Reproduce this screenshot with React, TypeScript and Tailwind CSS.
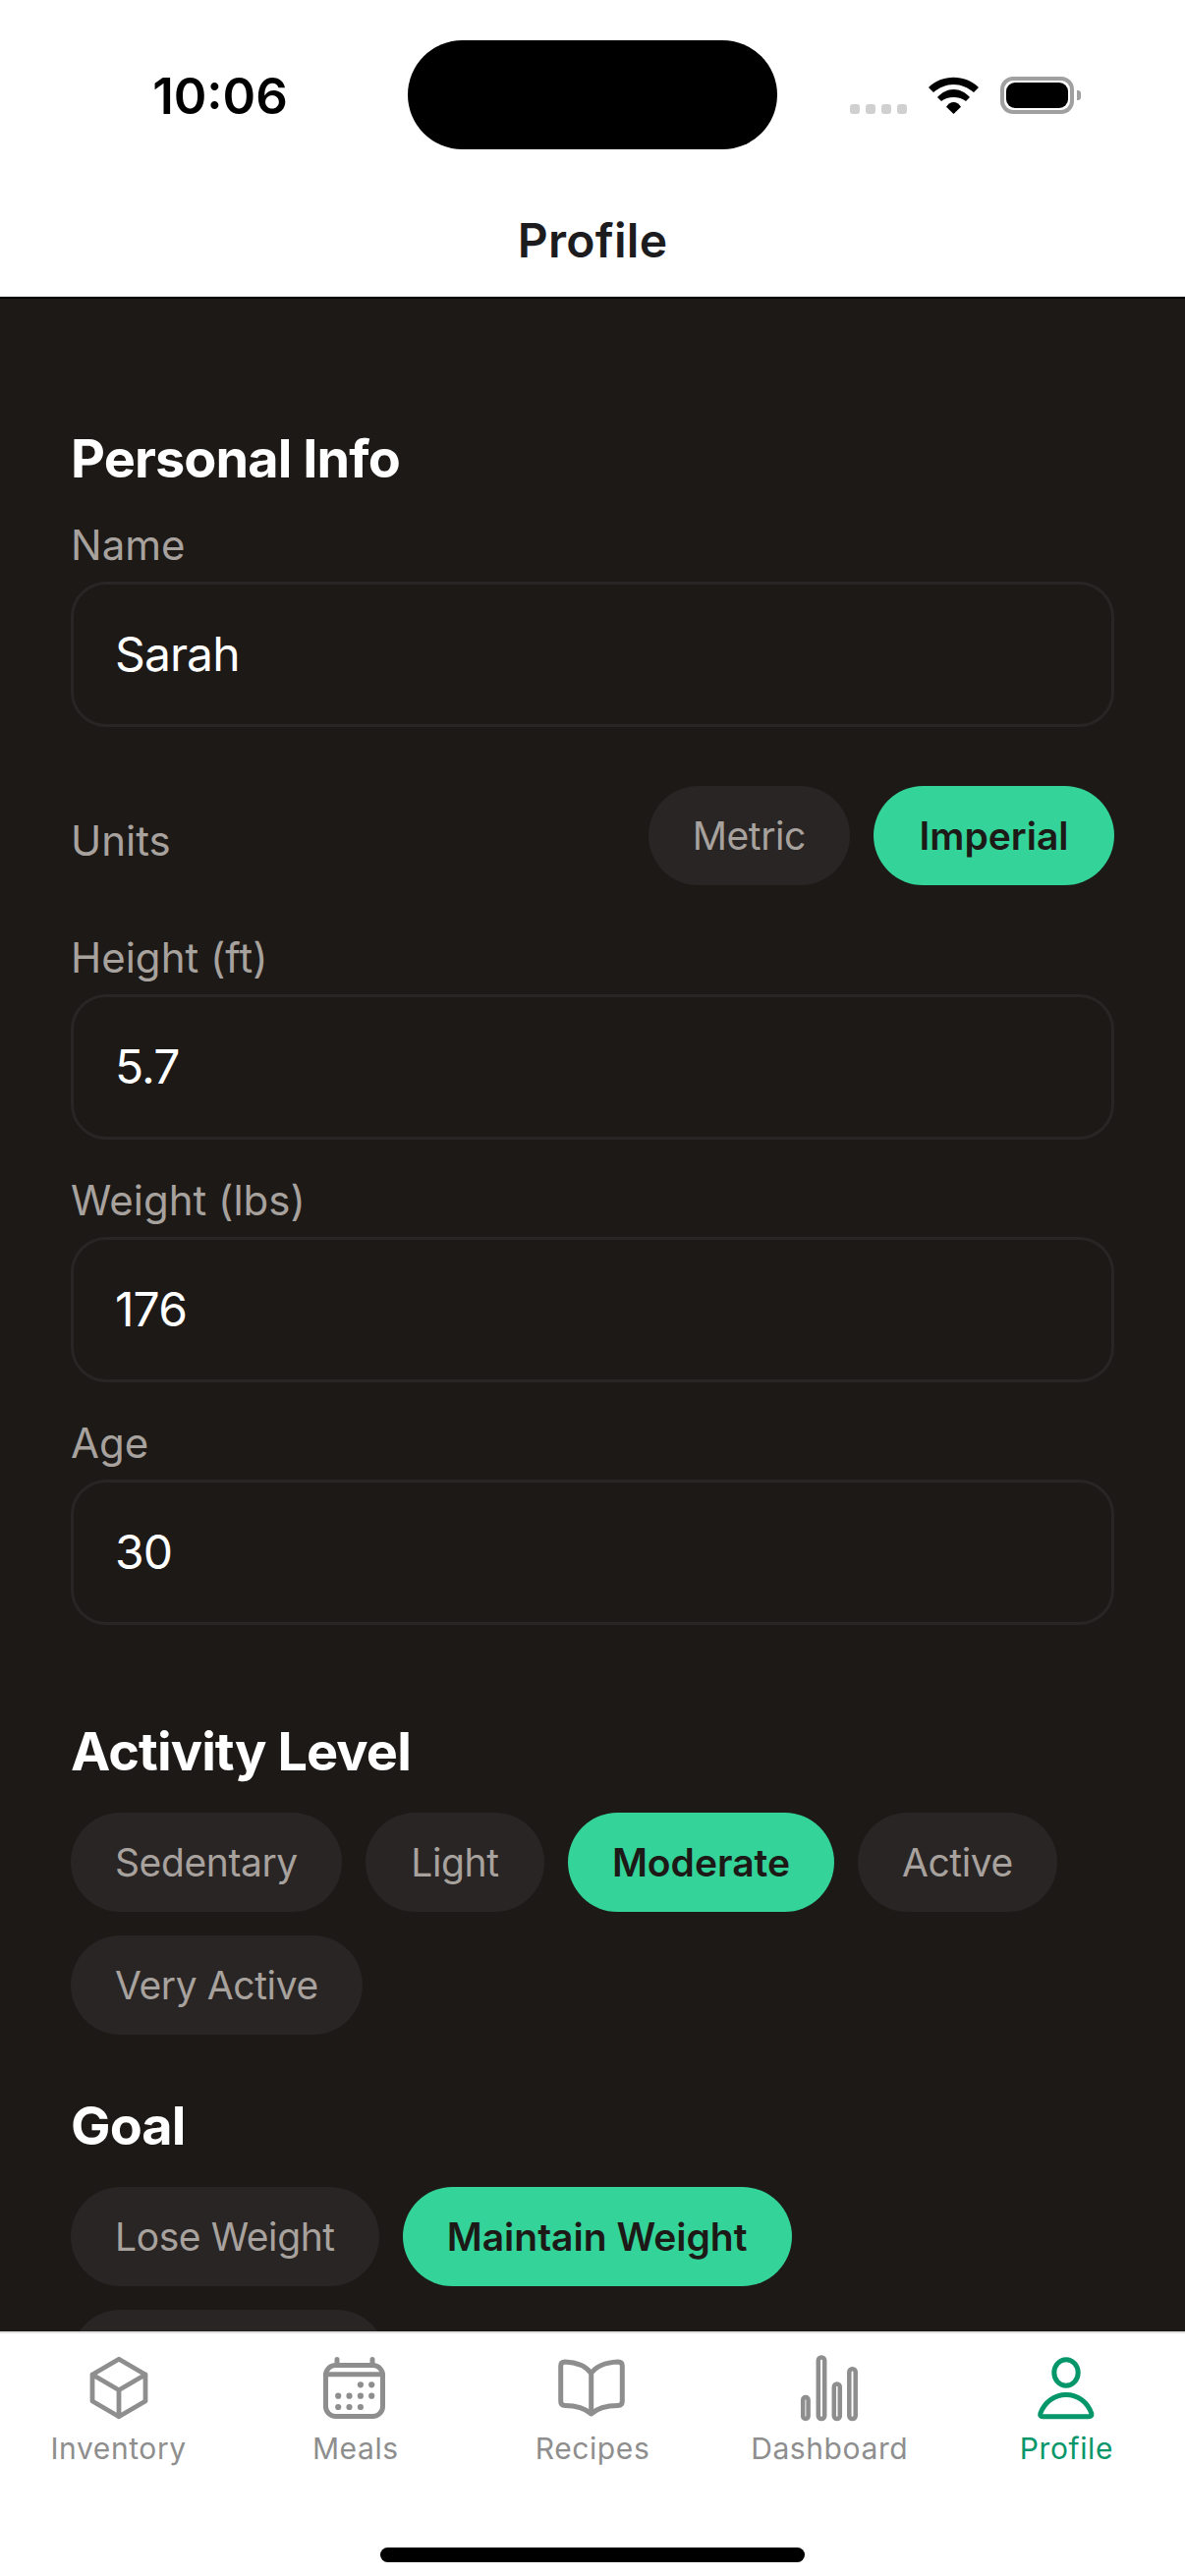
import React from "react";

const Field = ({ label, value, className = "" }: { label: string; value: string; className?: string }) => (
  <div className={className}>
    <div className="h-[51px] text-[42px] leading-[51px] text-[#a8a29e]">{label}</div>
    <div className="mt-[12px] flex h-[148px] items-center rounded-[36px] border-[3px] border-[#292524] pl-[42px] text-[48px] tracking-[-0.9px] text-white">
      {value}
    </div>
  </div>
);

const Pill = ({ label, active = false, className = "" }: { label?: string; active?: boolean; className?: string }) => (
  <div
    className={
      (active
        ? "flex h-[101px] items-center justify-center rounded-full bg-[#34d399] px-[45px] pt-[2px] text-[39px] font-semibold text-[#1c1917] "
        : "flex h-[101px] items-center justify-center rounded-full bg-[#292524] px-[45px] pt-[2px] text-[39px] tracking-[-0.4px] text-[#a8a29e] ") + className
    }
  >
    {label}
  </div>
);

const Title = ({ children, className = "" }: { children: React.ReactNode; className?: string }) => (
  <div className={"h-[66px] text-[54px] font-bold leading-[66px] tracking-[-0.9px] text-white " + className}>{children}</div>
);

const iconBase = {
  width: 84,
  height: 72,
  viewBox: "0 0 84 72",
  fill: "none",
  stroke: "currentColor",
  strokeLinecap: "round" as const,
  strokeLinejoin: "round" as const,
};

const BoxIcon = () => (
  <svg {...iconBase} strokeWidth={5}>
    <g transform="translate(6 -0.5) scale(3)" strokeWidth={1.6}>
      <path d="M21 7.5l-9-5.25L3 7.5m18 0l-9 5.25m9-5.25v9l-9 5.25M3 7.5l9 5.25M3 7.5v9l9 5.25m0-9v9" />
    </g>
  </svg>
);

const CalIcon = () => (
  <svg {...iconBase} strokeWidth={5}>
    <rect x="11.5" y="12.5" width="58" height="52" rx="10" />
    <path d="M11.5 21.7H69.5M23 6.5V12M59 6.5V12" />
    <g fill="currentColor" stroke="none">
      {[
        [46.9, 32.3],
        [58.2, 32.3],
        [24.2, 43.7],
        [35.5, 43.7],
        [46.9, 43.7],
        [58.2, 43.7],
        [24.2, 55],
        [35.5, 55],
        [46.9, 55],
      ].map(([cx, cy]) => (
        <circle key={`${cx}-${cy}`} cx={cx} cy={cy} r={3.1} />
      ))}
    </g>
  </svg>
);

const BookIcon = () => (
  <svg {...iconBase} strokeWidth={5}>
    <path d="M40.7 20.7C35 13 26 9.5 14 9Q9.7 9 9.7 13V49Q9.7 53.5 14 53.5C25 53.5 34 56 40.7 62C47 56 56 53.5 68 53.5Q72.3 53.5 72.3 49V13Q72.3 9 68 9C56 9.5 46 13 40.7 20.7ZM40.7 20.7V62" />
  </svg>
);

const BarsIcon = () => (
  <svg {...iconBase} strokeWidth={4.5}>
    <rect x="15.2" y="45" width="5.4" height="22" rx="2.7" />
    <rect x="30.8" y="4.5" width="6.4" height="62.5" rx="3" />
    <rect x="46.8" y="31.5" width="6" height="35.5" rx="3" />
    <rect x="62.3" y="16.2" width="6.4" height="50.8" rx="3" />
  </svg>
);

const UserIcon = () => (
  <svg {...iconBase} strokeWidth={5}>
    <ellipse cx="42" cy="20" rx="12.2" ry="13.2" />
    <path d="M19 64.8H65Q68.5 64.8 67.8 61.5C64 50 54 42.5 42 42.5C30 42.5 20 50 15.8 61.5Q15 64.8 19 64.8Z" />
  </svg>
);

const Tab = ({ label, icon, active = false }: { label: string; icon: React.ReactNode; active?: boolean }) => (
  <div className={"flex flex-1 flex-col items-center " + (active ? "text-[#059669]" : "text-[#8e8e8e]")}>
    {icon}
    <div className="mt-[7px] h-[36px] text-[30px] leading-[36px] tracking-[0.6px]">{label}</div>
  </div>
);

export default function App() {
  return (
    <div className="flex h-[2622px] w-[1206px] flex-col overflow-hidden bg-white font-['Inter',sans-serif]">
      <header className="h-[304px] shrink-0 border-b-[2px] border-black bg-white">
        <div className="flex h-[152px] items-start pt-[41px]">
          <div className="flex h-[111px] w-[415px] items-center justify-center pl-[33px] pt-[3px] text-[51px] font-semibold text-black">
            10:06
          </div>
          <div className="h-[111px] w-[376px] rounded-[56px] bg-black" />
          <div className="flex items-end pl-[74px] pt-[37px]">
            <div className="flex gap-[6px]">
              <div className="h-[10px] w-[10px] rounded-[3px] bg-[#d0d0d0]" />
              <div className="h-[10px] w-[10px] rounded-[3px] bg-[#d0d0d0]" />
              <div className="h-[10px] w-[10px] rounded-[3px] bg-[#d0d0d0]" />
              <div className="h-[10px] w-[10px] rounded-[3px] bg-[#d0d0d0]" />
            </div>
            <svg width="51" height="38" viewBox="0 0 51 38" className="ml-[22px]" fill="black">
              <path d="M0 11C7 4 16 .7 25.5 .7S44 4 51 11L46 16C40 11 33 8 25.5 8S11 11 5 16Z" />
              <path d="M9 21C13.500 16 19 13 25.500 13S37.500 16 42 21L38 25C34.500 22.500 30.500 21 25.500 21S16.500 22.500 13 25Z" />
              <path d="M18 30.700C20 28 22.500 26 25.500 26S31 28 33 30.700L25.500 38Z" />
            </svg>
            <div className="ml-[22px] flex items-center">
              <div className="flex h-[38px] w-[75px] items-center justify-center rounded-[13px] border-[4px] border-[#a0a0a0]">
                <div className="h-[26px] w-[63px] rounded-[9px] bg-black" />
              </div>
              <div className="ml-[3px] h-[10px] w-[4px] rounded-r-[3px] bg-[#a0a0a0]" />
            </div>
          </div>
        </div>
        <div className="flex h-[150px] items-center justify-center pt-[35px] text-[48px] font-semibold tracking-[0.3px] text-[#1c1c1e]">
          Profile
        </div>
      </header>

      <main className="min-h-0 flex-1 overflow-hidden bg-[#1c1917] px-[72px] pt-[130px]">
        <Title>Personal Info</Title>
        <Field label="Name" value="Sarah" className="mt-[29px]" />
        <div className="mt-[60px] flex items-center justify-between">
          <div className="pt-[10px] text-[42px] leading-[51px] text-[#a8a29e]">Units</div>
          <div className="flex gap-[24px]">
            <Pill label="Metric" />
            <Pill label="Imperial" active className="w-[245px]" />
          </div>
        </div>
        <Field label="Height (ft)" value="5.7" className="mt-[48px]" />
        <Field label="Weight (lbs)" value="176" className="mt-[36px]" />
        <Field label="Age" value="30" className="mt-[36px]" />
        <Title className="mt-[96px]">Activity Level</Title>
        <div className="mt-[29px] flex flex-wrap gap-[24px]">
          <Pill label="Sedentary" />
          <Pill label="Light" className="w-[182px]" />
          <Pill label="Moderate" active />
          <Pill label="Active" />
          <Pill label="Very Active" />
        </div>
        <Title className="mt-[60px]">Goal</Title>
        <div className="mt-[29px] flex flex-wrap gap-[24px]">
          <Pill label="Lose Weight" />
          <Pill label="Maintain Weight" active />
          <Pill className="w-[321px]" />
        </div>
      </main>

      <nav className="h-[249px] shrink-0 border-t-[2px] border-[#e0e0e0] bg-white">
        <div className="flex pt-[20px]">
          <Tab label="Inventory" icon={<BoxIcon />} />
          <Tab label="Meals" icon={<CalIcon />} />
          <Tab label="Recipes" icon={<BookIcon />} />
          <Tab label="Dashboard" icon={<BarsIcon />} />
          <Tab label="Profile" icon={<UserIcon />} active />
        </div>
        <div className="mx-auto mt-[83px] h-[15px] w-[432px] rounded-full bg-black" />
      </nav>
    </div>
  );
}
